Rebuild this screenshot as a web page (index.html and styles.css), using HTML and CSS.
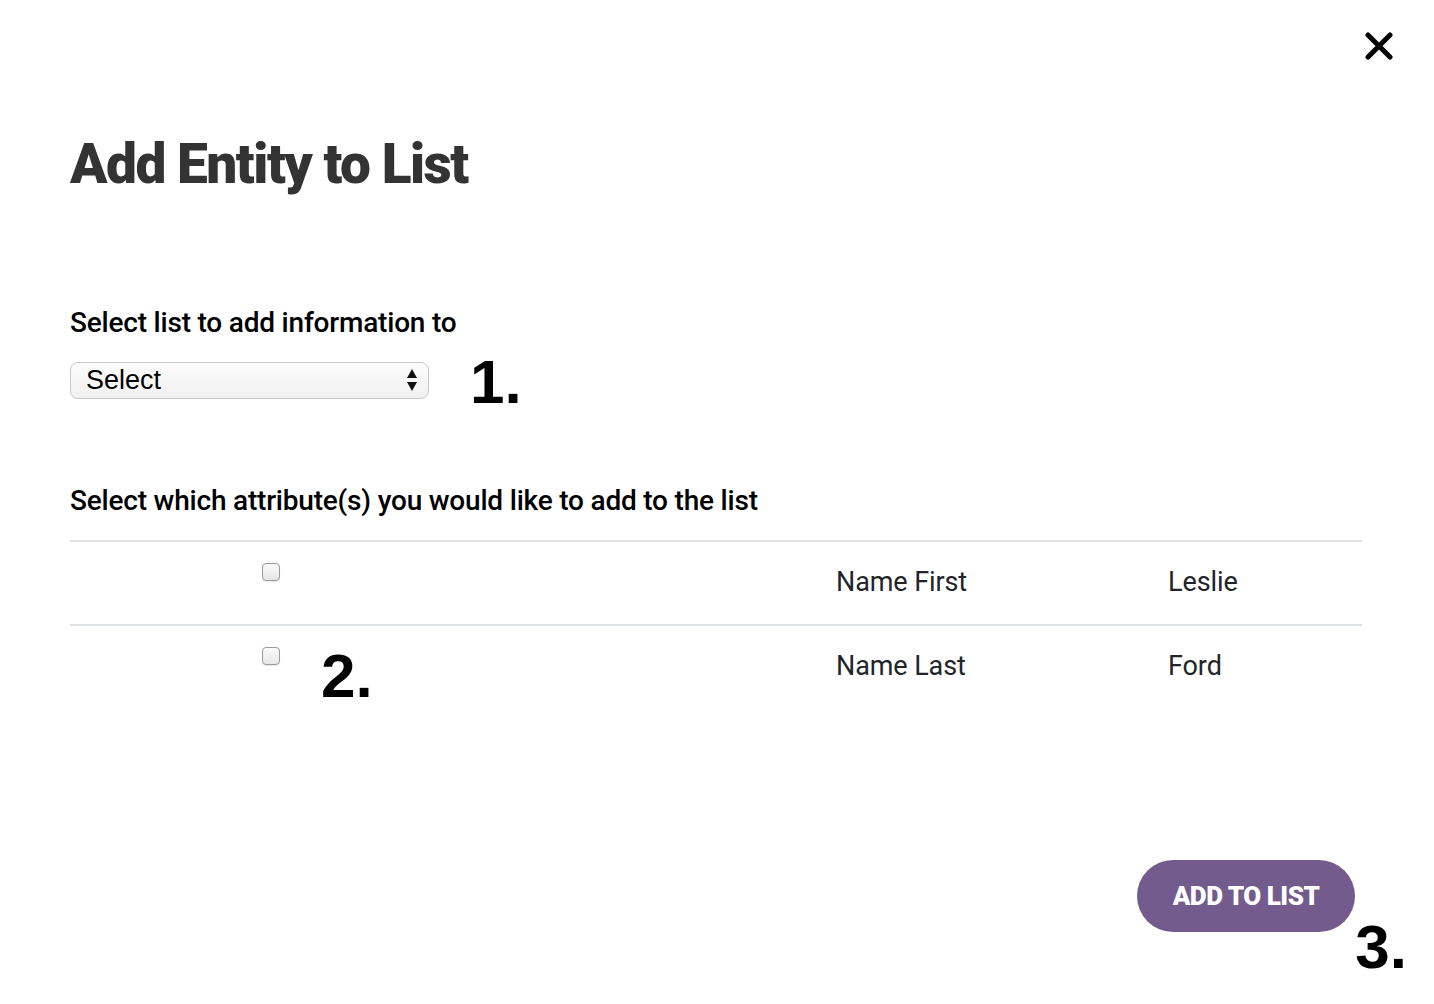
FILE: index.html
```html
<!DOCTYPE html>
<html lang="en">
<head>
<meta charset="utf-8">
<title>Add Entity to List</title>
<link rel="stylesheet" href="styles.css">
</head>
<body>
<div class="modal">
  <div class="topbar">
    <button class="close" aria-label="Close">
      <svg width="28" height="28" viewBox="0 0 28 28"><path d="M3 3 L25 25 M25 3 L3 25" stroke="#000" stroke-width="5" stroke-linecap="round"/></svg>
    </button>
  </div>
  <h1 class="title">Add Entity to List</h1>

  <p class="label label-list">Select list to add information to</p>
  <div class="select-row">
    <div class="select">
      <span>Select</span>
      <svg class="arrows" width="12" height="26" viewBox="0 0 12 26"><path d="M6 2 L11 11 L1 11 Z M1 15 L11 15 L6 24 Z" fill="#111"/></svg>
    </div>
    <span class="step step1">1.</span>
  </div>

  <p class="label label-attr">Select which attribute(s) you would like to add to the list</p>
  <div class="table">
    <div class="row">
      <div class="cell check"><span class="box"></span></div>
      <div class="cell"></div>
      <div class="cell text">Name First</div>
      <div class="cell text">Leslie</div>
    </div>
    <div class="row">
      <div class="cell check"><span class="box"></span><span class="step step2">2.</span></div>
      <div class="cell"></div>
      <div class="cell text">Name Last</div>
      <div class="cell text">Ford</div>
    </div>
  </div>

  <div class="footer">
    <button class="add">ADD TO LIST</button>
    <span class="step step3">3.</span>
  </div>
</div>
</body>
</html>
```

FILE: styles.css
```css
html, body {
  margin: 0;
  padding: 0;
  background: #fff;
}
.modal {
  width: 1434px;
  height: 1004px;
  box-sizing: border-box;
  padding: 0 72px 0 70px;
  position: relative;
  font-family: Roboto, "Liberation Sans", sans-serif;
}
.topbar {
  display: flex;
  justify-content: flex-end;
  padding-top: 32px;
  margin-right: -31px;
}
.close {
  border: 0;
  background: none;
  padding: 0;
  width: 28px;
  height: 28px;
  cursor: pointer;
}
.close svg { display: block; }
.title {
  margin: 69px 0 0 0;
  font-size: 55px;
  line-height: 70px;
  font-weight: 900;
  color: #333;
  letter-spacing: -1.5px;
}
.label {
  margin: 0;
  font-size: 28px;
  line-height: 36px;
  font-weight: 500;
  color: #000;
  letter-spacing: -0.2px;
}
.label-list { margin-top: 106px; }
.label-attr { margin-top: 70px; letter-spacing: -0.2px; }
.select-row {
  display: flex;
  align-items: center;
  margin-top: 6px;
  position: relative;
}
.select {
  width: 359px;
  height: 37px;
  box-sizing: border-box;
  border: 1.5px solid #c8c8c8;
  border-radius: 8px;
  background: linear-gradient(#fcfcfc, #f1f1f1);
  display: flex;
  align-items: center;
  justify-content: space-between;
  padding: 0 10px 0 15px;
  font-family: "Liberation Sans", Arial, sans-serif;
  font-size: 27px;
  color: #000;
}
.arrows { display: block; }
.step {
  font-family: "Liberation Sans", Arial, sans-serif;
  font-weight: 700;
  font-size: 62px;
  line-height: 1;
  color: #000;
}
.step1 { margin-left: 41px; margin-top: 4px; }
.table {
  margin-top: 21px;
  border-top: 2px solid #dee2e6;
}
.row {
  display: grid;
  grid-template-columns: 402px 364px 332px 1fr;
  height: 82px;
}
.row + .row { border-top: 2px solid #dee2e6; }
.cell {
  padding-top: 21px;
  box-sizing: border-box;
}
.check {
  position: relative;
  display: flex;
  justify-content: center;
}
.box {
  display: block;
  width: 16px;
  height: 16px;
  border: 1.5px solid #9a9a9a;
  border-radius: 4px;
  background: linear-gradient(#fbfbfb, #e6e6e6);
  box-shadow: 0 1px 1px rgba(0,0,0,0.1);
  margin-left: 0;
}
.step2 {
  position: absolute;
  left: 251px;
  top: 19px;
}
.text {
  font-size: 27px;
  color: #212529;
  line-height: 32px;
  padding-top: 24px;
  letter-spacing: -0.1px;
}
.footer {
  display: flex;
  justify-content: flex-end;
  margin-top: 152px;
  margin-right: -45px;
  position: relative;
}
.add {
  width: 218px;
  height: 72px;
  border: 0;
  border-radius: 36px;
  background: #735c8d;
  color: #fff;
  font-family: Roboto, sans-serif;
  font-weight: 900;
  font-size: 26px;
  letter-spacing: -0.5px;
  margin-right: 52px;
  cursor: pointer;
}
.step3 {
  position: absolute;
  right: 0;
  top: 56px;
}
```
